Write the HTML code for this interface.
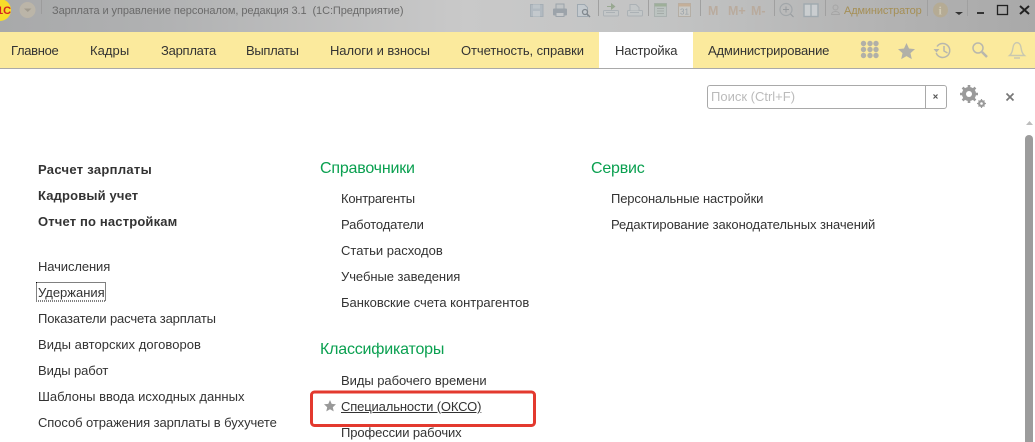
<!DOCTYPE html>
<html><head><meta charset="utf-8"><style>
*{margin:0;padding:0;box-sizing:border-box}
html,body{width:1035px;height:442px;overflow:hidden;background:#fff;font-family:"Liberation Sans",sans-serif;color:#333}
.t{position:absolute;white-space:nowrap;font-size:13px;line-height:16px}
.b{font-weight:bold}
.g{color:#0aa050;font-size:16px;line-height:20px}
.m{position:absolute;top:43px;white-space:nowrap;font-size:13px;line-height:16px;color:#333}
svg{position:absolute;left:0;top:0}
</style></head><body>
<div style="position:absolute;left:0;top:0;width:1035px;height:32px;background:linear-gradient(90deg,#a8a9aa 0,#b0b1b2 15%,#c9c9c9 45%,#c2c3c3 65%,#b3b3b3 85%,#a9a9a9 100%)"></div>
<div style="position:absolute;left:0;top:32px;width:1035px;height:37px;background:#fbea9d;border-bottom:1px solid #a9a9a9"></div>
<div style="position:absolute;left:599px;top:32px;width:94px;height:36px;background:#fff"></div>
<div class="t" style="left:52px;top:3px;font-size:11px;color:#6a6a6a;letter-spacing:-.08px">Зарплата и управление персоналом, редакция 3.1&nbsp; (1С:Предприятие)</div>
<div class="m" style="left:11px;letter-spacing:-.32px">Главное</div>
<div class="m" style="left:90px;letter-spacing:.05px">Кадры</div>
<div class="m" style="left:161px;letter-spacing:-.25px">Зарплата</div>
<div class="m" style="left:246px;letter-spacing:-.32px">Выплаты</div>
<div class="m" style="left:330px;letter-spacing:-.08px">Налоги и взносы</div>
<div class="m" style="left:461px;letter-spacing:-.07px">Отчетность, справки</div>
<div class="m" style="left:615px;letter-spacing:-.19px">Настройка</div>
<div class="m" style="left:708px;letter-spacing:-.16px">Администрирование</div>
<div class="t" style="left:844px;top:3px;font-size:11px;color:#a58f55;letter-spacing:-.14px">Администратор</div>

<svg width="1035" height="442" viewBox="0 0 1035 442">
<circle cx="0" cy="10" r="11" fill="#f7dd2a"/>
<text x="-3" y="14" font-family="Liberation Sans" font-size="11" font-weight="bold" fill="#d3231f">1С</text>
<circle cx="27.500" cy="10" r="8" fill="#bbb5a8"/><path d="M24 8.500h7.500l-3.750 3.500z" fill="#a09a8e"/>
<path d="M41.500 0V14" stroke="#9c9c9c"/>
<!-- toolbar -->
<g opacity=".75">
<rect x="530.500" y="4.500" width="12.500" height="12" fill="#abb6bf" stroke="#9aa6b0"/><rect x="533" y="4.500" width="7" height="4" fill="#bcc5cc"/><rect x="533" y="11" width="7" height="5.500" fill="#c4cad0"/>
<rect x="553" y="8.500" width="14" height="7" rx="1" fill="#8e98a1"/><rect x="556" y="4" width="8" height="5" fill="#c0c4c7" stroke="#8e98a1"/><rect x="556" y="12.500" width="8" height="4" fill="#c8cbcd" stroke="#8e98a1"/>
<path d="M577.500 4.500h7l3 3v9h-10z" fill="#c4ccd2" stroke="#93a0ab"/><circle cx="585" cy="12" r="2.500" fill="none" stroke="#6b747c" stroke-width="1.300"/><path d="M587 14l3 3" stroke="#6b747c" stroke-width="1.500"/>
<g fill="#c4c8ca" stroke="#a3abb0"><rect x="603.500" y="10.500" width="15" height="5.500" rx="1"/><rect x="627.500" y="10.500" width="15" height="5.500" rx="1"/><path d="M630 10.500V4.500h6l3 3v3"/></g>
<path d="M607 6h4V3l4.500 3.500-4.500 3.500V7h-4z" fill="#8a9f80"/>
<path d="M606 12.500h9M630 12.500h9" stroke="#a3abb0"/>
<rect x="654.500" y="3.500" width="12" height="13" fill="#b9c3bf" stroke="#a3acaa"/><rect x="654.500" y="3.500" width="12" height="3" fill="#93a98c"/>
<g fill="#9aa39f"><rect x="657" y="8" width="7" height="1"/><rect x="657" y="10.500" width="7" height="1"/><rect x="657" y="13" width="7" height="1"/></g>
<rect x="678.500" y="3.500" width="12" height="13" fill="#cbcac6" stroke="#b0a89c"/><rect x="678.500" y="3.500" width="12" height="3" fill="#c6a98c"/>
<text x="680" y="14.500" font-family="Liberation Sans" font-size="8" fill="#8b97a0">31</text>
<g font-family="Liberation Sans" font-size="12.500" font-weight="bold" fill="#b8a593">
<text x="708" y="15">M</text><text x="728" y="15">M+</text><text x="751" y="15">M-</text></g>
<circle cx="786" cy="9.500" r="6" fill="none" stroke="#9aa0a4" stroke-width="1.200"/><path d="M783 9.500h6M786 6.500v6M790.500 14l3 3" stroke="#8a9094" fill="none"/>
<rect x="804" y="4" width="14" height="12.500" fill="#d0d5d8" stroke="#98a4ac" stroke-width="1.400"/><path d="M811 4v12.500" stroke="#98a4ac" stroke-width="1.300"/>
<circle cx="835.500" cy="7.500" r="2.500" fill="none" stroke="#a0a0a0"/><path d="M831.500 14.500c0-4 8-4 8 0z" fill="none" stroke="#a0a0a0"/>
</g>
<circle cx="940.500" cy="10" r="7.500" fill="#b5ab94"/><text x="938.500" y="14.500" font-family="Liberation Serif" font-size="12" font-weight="bold" fill="#d0c9b4">i</text>
<path d="M955 12h8l-4 3z" fill="#333"/>
<g stroke="#a0a0a0" stroke-width="1"><path d="M598.500 0V16M648.500 0V16M700.500 0V16M774.500 0V16M825.500 0V16M927.500 0V16M967.500 0V16"/></g>
<path d="M977 13h7" stroke="#333" stroke-width="2"/>
<rect x="997.500" y="5.500" width="10" height="9" fill="none" stroke="#222" stroke-width="1.300"/>
<path d="M1020 6l9 8M1029 6l-9 8" stroke="#222" stroke-width="2"/>
<!-- yellow bar icons -->
<g fill="#b1b0a8">
<circle cx="863.500" cy="43.500" r="2.700"/><circle cx="870" cy="43.500" r="2.700"/><circle cx="876" cy="43.500" r="2.700"/>
<circle cx="863.500" cy="49.500" r="2.700"/><circle cx="870" cy="49.500" r="2.700"/><circle cx="876" cy="49.500" r="2.700"/>
<circle cx="863.500" cy="55.500" r="2.700"/><circle cx="870" cy="55.500" r="2.700"/><circle cx="876" cy="55.500" r="2.700"/>
<path d="M906.500 43l2.500 5.500 6 .600-4.500 4 1.300 6-5.300-3-5.300 3 1.300-6-4.500-4 6-.600z"/>
</g>
<g fill="none" stroke="#b8b7ad" stroke-width="1.500">
<path d="M937 46.500a7 7 0 1 1-.8 6.500"/><path d="M944 46v5l3.500 2"/>
<circle cx="978" cy="48" r="5"/><path d="M982 52l5 5" stroke-width="2.500"/>
</g>
<path d="M933.500 49h6l-3 3.500z" fill="#b8b7ad"/>
<path d="M1009.500 55.500c2.500-2 3-5 3.500-8 .7-6.500 7.300-6.500 8 0 .5 3 1 6 3.500 8zM1014 58h6" fill="none" stroke="#c9c8b0" stroke-width="1.400"/>
<!-- search -->
<rect x="707.500" y="85.500" width="239" height="23" rx="2.500" fill="#fff" stroke="#a9a9a9"/>
<path d="M925.500 86v22" stroke="#a9a9a9"/>
<path d="M933.500 94.500l4 4M937.500 94.500l-4 4" stroke="#555" stroke-width="1.200"/>
<path d="M1006.500 93.500l7 7M1013.500 93.500l-7 7" stroke="#777" stroke-width="1.700"/>
<g fill="none" stroke="#9a9a9a">
<circle cx="969" cy="94" r="5" stroke-width="4"/>
<path d="M969 85v18M960 94h18M962.600 87.600l12.800 12.800M975.400 87.600l-12.800 12.800" stroke-width="2.600"/>
<circle cx="981.500" cy="103.500" r="2.500" stroke-width="2"/>
<path d="M981.500 99v9M977 103.500h9M978.500 100.500l6 6M984.500 100.500l-6 6" stroke-width="1.200"/>
</g>
<circle cx="969" cy="94" r="3" fill="#fff"/><circle cx="981.500" cy="103.500" r="1.300" fill="#fff"/>
<!-- scrollbar -->
<path d="M1026 125l3.500-4 3.500 4z" fill="#bdbdbd"/>
<path d="M1025 442V139a4 4 0 0 1 8 0V442z" fill="#9c9c9c"/>
<!-- highlight -->
<rect x="311.500" y="392" width="223" height="33.500" rx="3" fill="none" stroke="#e3392e" stroke-width="3"/>
<path d="M330 400l1.700 3.900 4.300.400-3.200 2.900.9 4.200-3.700-2.200-3.700 2.200.9-4.200-3.200-2.900 4.300-.400z" fill="#999"/>
<!-- focus -->
<rect x="36.500" y="282.500" width="69" height="18.500" fill="none" stroke="#000" stroke-dasharray="1 1"/>
</svg>

<div class="t" style="left:711px;top:89px;font-size:13px;color:#bbb">Поиск (Ctrl+F)</div>

<div class="t b" style="left:38px;top:162px;letter-spacing:.3px">Расчет зарплаты</div>
<div class="t b" style="left:38px;top:188px;letter-spacing:.15px">Кадровый учет</div>
<div class="t b" style="left:38px;top:214px;letter-spacing:.16px">Отчет по настройкам</div>
<div class="t" style="left:38px;top:259px;letter-spacing:-.1px">Начисления</div>
<div class="t" style="left:38px;top:285px">Удержания</div>
<div class="t" style="left:38px;top:311px;letter-spacing:-.15px">Показатели расчета зарплаты</div>
<div class="t" style="left:38px;top:337px;letter-spacing:.04px">Виды авторских договоров</div>
<div class="t" style="left:38px;top:363px;letter-spacing:-.1px">Виды работ</div>
<div class="t" style="left:38px;top:389px">Шаблоны ввода исходных данных</div>
<div class="t" style="left:38px;top:415px;letter-spacing:-.08px">Способ отражения зарплаты в бухучете</div>

<div class="t g" style="left:320px;top:159px;letter-spacing:-.2px">Справочники</div>
<div class="t" style="left:341px;top:191px;letter-spacing:-.25px">Контрагенты</div>
<div class="t" style="left:341px;top:217px;letter-spacing:-.15px">Работодатели</div>
<div class="t" style="left:341px;top:243px">Статьи расходов</div>
<div class="t" style="left:341px;top:269px;letter-spacing:-.05px">Учебные заведения</div>
<div class="t" style="left:341px;top:295px;letter-spacing:-.03px">Банковские счета контрагентов</div>
<div class="t g" style="left:320px;top:340px;letter-spacing:-.2px">Классификаторы</div>
<div class="t" style="left:341px;top:373px;letter-spacing:-.05px">Виды рабочего времени</div>
<div class="t" style="left:341px;top:399px;text-decoration:underline;letter-spacing:-.14px">Специальности (ОКСО)</div>
<div class="t" style="left:341px;top:425px;letter-spacing:-.1px">Профессии рабочих</div>

<div class="t g" style="left:591px;top:159px;letter-spacing:-.2px">Сервис</div>
<div class="t" style="left:611px;top:191px;letter-spacing:-.14px">Персональные настройки</div>
<div class="t" style="left:611px;top:217px;letter-spacing:-.07px">Редактирование законодательных значений</div>
</body></html>
